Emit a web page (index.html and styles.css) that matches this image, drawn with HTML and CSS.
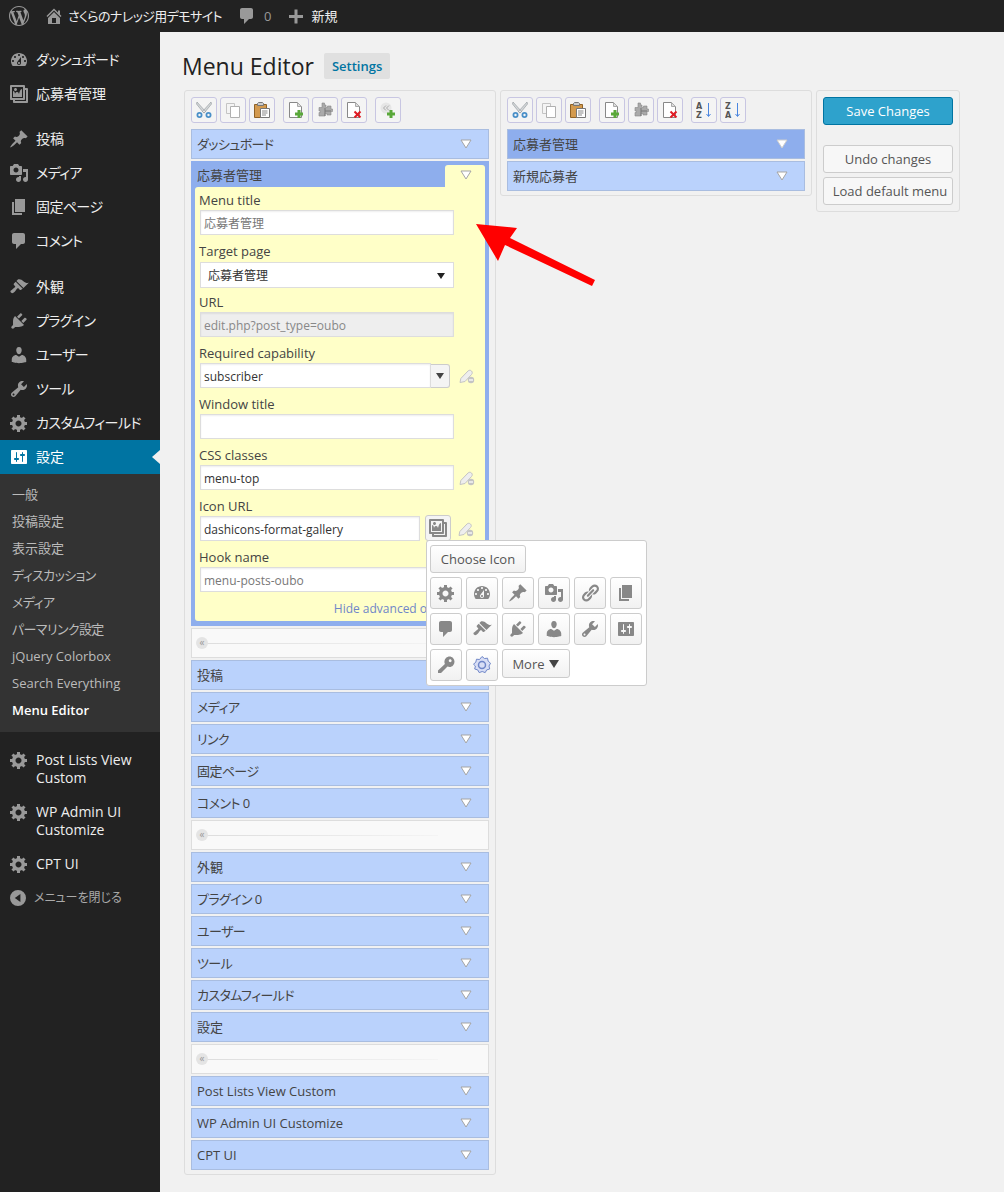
FILE: index.html

```html
<!DOCTYPE html>
<html>
<head>
<title>Menu Editor</title>
<meta name="viewport" content="width=device-width, initial-scale=1">
<link rel="stylesheet" href="styles.css">
</head>
<body>
<svg class="defs" aria-hidden="true">
  <!-- admin icons, 20 unit grid -->
  <symbol id="i-wp" viewBox="0 0 20 20"><path d="M20 10c0-5.51-4.49-10-10-10C4.48 0 0 4.49 0 10c0 5.52 4.48 10 10 10 5.51 0 10-4.48 10-10zM7.78 15.37L4.37 6.22c.55-.02 1.17-.08 1.17-.08.5-.06.44-1.13-.06-1.11 0 0-1.45.11-2.37.11-.18 0-.37 0-.58-.01C4.12 2.69 6.87 1.11 10 1.11c2.33 0 4.45.87 6.05 2.34-.68-.11-1.65.39-1.65 1.58 0 .74.45 1.36.9 2.1.35.61.55 1.36.55 2.46 0 1.49-1.4 5-1.4 5l-3.03-8.37c.54-.02.82-.17.82-.17.5-.05.44-1.25-.06-1.22 0 0-1.44.12-2.38.12-.87 0-2.33-.12-2.33-.12-.5-.03-.56 1.2-.06 1.22l.92.08 1.26 3.41zM17.41 10c.24-.64.74-1.87.43-4.25.7 1.29 1.05 2.71 1.05 4.25 0 3.29-1.73 6.24-4.4 7.78.97-2.59 1.94-5.2 2.92-7.78zM6.1 18.09C3.12 16.65 1.11 13.53 1.11 10c0-1.3.23-2.48.72-3.59C3.25 10.3 4.67 14.2 6.1 18.09zm4.03-6.63l2.58 6.98c-.86.29-1.76.45-2.71.45-.79 0-1.57-.11-2.29-.33.81-2.38 1.62-4.74 2.42-7.1z"/></symbol>
  <symbol id="i-home" viewBox="0 0 20 20"><path d="M16 8.5l1.53 1.53-1.06 1.06L10 4.62l-6.47 6.47-1.06-1.06L10 2.5l4 4v-2h2v4zm-6-2.46l6 5.99V18H4v-5.97zM12 17v-5H8v5h4z"/></symbol>
  <symbol id="i-plus" viewBox="0 0 20 20"><path d="M17 9v3h-5.5v5.5h-3V12H3V9h5.5V3.5h3V9z"/></symbol>
  <symbol id="i-dash" viewBox="0 0 20 20"><path d="M3.76 16h12.48c1.1-1.37 1.76-3.11 1.76-5 0-4.42-3.58-8-8-8s-8 3.58-8 8c0 1.89.66 3.63 1.76 5zM10 4c.55 0 1 .45 1 1s-.45 1-1 1-1-.45-1-1 .45-1 1-1zM6 6c.55 0 1 .45 1 1s-.45 1-1 1-1-.45-1-1 .45-1 1-1zm8 0c.55 0 1 .45 1 1s-.45 1-1 1-1-.45-1-1 .45-1 1-1zm-5.37 5.55L12 7v6c0 1.1-.9 2-2 2s-2-.9-2-2c0-.57.24-1.08.63-1.45zM4 10c.55 0 1 .45 1 1s-.45 1-1 1-1-.45-1-1 .45-1 1-1zm12 0c.55 0 1 .45 1 1s-.45 1-1 1-1-.45-1-1 .45-1 1-1zm-5 3c0-.55-.45-1-1-1s-1 .45-1 1 .45 1 1 1 1-.45 1-1z"/></symbol>
  <symbol id="i-gallery" viewBox="0 0 20 20"><path d="M16 4h1.96c.57 0 1.04.47 1.04 1.04v12.92c0 .57-.47 1.04-1.04 1.04H5.04C4.47 19 4 18.53 4 17.96V16H2.04C1.47 16 1 15.53 1 14.96V2.04C1 1.47 1.47 1 2.04 1h12.92c.57 0 1.04.47 1.04 1.04V4zM3 14h11V3H3v11zm5-8.5C8 4.67 7.33 4 6.5 4S5 4.67 5 5.5 5.67 7 6.5 7 8 6.33 8 5.5zm2 4.5s1-5 3-5v8H4V7c2 0 2 3 2 3s.33-2 2-2 2 2 2 2zm7 7V6h-1v8.96c0 .57-.47 1.04-1.04 1.04H6v1h11z"/></symbol>
  <symbol id="i-pin" viewBox="0 0 20 20"><path d="M10.44 3.02l1.82-1.82 6.36 6.35-1.83 1.82c-1.05-.68-2.48-.57-3.41.36l-.75.75c-.92.93-1.04 2.35-.35 3.41l-1.83 1.82-2.41-2.41-2.8 2.79c-.42.42-3.38 2.71-3.8 2.29s1.86-3.39 2.28-3.81l2.79-2.79L4.1 9.36l1.83-1.82c1.05.69 2.48.57 3.4-.36l.75-.75c.93-.92 1.05-2.35.36-3.41z"/></symbol>
  <symbol id="i-media" viewBox="0 0 20 20"><path d="M13 11V4c0-.55-.45-1-1-1h-1.67L9 1H5L3.67 3H2c-.55 0-1 .45-1 1v7c0 .55.45 1 1 1h10c.55 0 1-.45 1-1zM7 4.5c1.38 0 2.5 1.12 2.5 2.5S8.38 9.5 7 9.5 4.5 8.38 4.5 7 5.62 4.5 7 4.5zM14 6h5v10.5c0 1.38-1.12 2.5-2.5 2.5S14 17.88 14 16.5s1.12-2.5 2.5-2.5c.17 0 .34.02.5.05V9h-3V6zm-4 8.05V13h2v3.5c0 1.38-1.12 2.5-2.5 2.5S7 17.88 7 16.5 8.12 14 9.5 14c.17 0 .34.02.5.05z"/></symbol>
  <symbol id="i-page" viewBox="0 0 20 20"><path d="M6 15V2h10v13H6zm-1 1h8v2H3V5h2v11z"/></symbol>
  <symbol id="i-comment" viewBox="0 0 20 20"><path d="M5 2h9c1.1 0 2 .9 2 2v7c0 1.1-.9 2-2 2h-2l-5 5v-5H5c-1.1 0-2-.9-2-2V4c0-1.1.9-2 2-2z"/></symbol>
  <symbol id="i-brush" viewBox="0 0 20 20"><path d="M14.48 11.06L7.41 3.99l1.5-1.5c.5-.56 2.3-.47 3.51.32 1.21.8 1.43 1.28 2.91 2.1 1.18.64 2.45 1.26 4.45.85zm-.71.71L6.7 4.7 4.93 6.47c-.39.39-.39 1.02 0 1.41l1.06 1.06c.39.39.39 1.03 0 1.42-.6.6-1.43 1.11-2.21 1.69-.35.26-.7.53-1.01.84C1.43 13.23.95 14.54 2 15.59c1.05 1.04 2.36.57 3.7-.76.31-.31.58-.66.84-1.01.58-.78 1.09-1.61 1.69-2.21.39-.39 1.02-.39 1.41 0l1.06 1.06c.39.39 1.02.39 1.41 0z"/></symbol>
  <symbol id="i-plug" viewBox="0 0 20 20"><path d="M13.11 4.36L9.87 7.6 8 5.73l3.24-3.24c.35-.34 1.05-.2 1.56.32.52.51.66 1.21.31 1.55zm-8 1.77l.91-1.12 9.01 9.01-1.19.84c-.71.71-2.63 1.16-3.82 1.16H6.14L4.9 17.26c-.59.59-1.54.59-2.12 0-.59-.58-.59-1.53 0-2.12l1.24-1.24v-3.88c0-1.13.4-3.19 1.09-3.89zm7.26 3.97l3.24-3.24c.34-.35 1.04-.21 1.55.31.52.51.66 1.21.31 1.55l-3.24 3.25z"/></symbol>
  <symbol id="i-user" viewBox="0 0 20 20"><path d="M10 9.25c-2.27 0-2.73-3.44-2.73-3.44C7 4.02 7.82 2 9.97 2c2.16 0 2.98 2.02 2.71 3.81 0 0-.41 3.44-2.68 3.44zm0 2.57L12.72 10c2.39 0 4.52 2.33 4.52 4.53v2.49s-3.65 1.13-7.24 1.13c-3.65 0-7.24-1.13-7.24-1.13v-2.49c0-2.25 1.94-4.48 4.47-4.48z"/></symbol>
  <symbol id="i-tool" viewBox="0 0 20 20"><path d="M16.68 9.77c-1.34 1.34-3.3 1.67-4.95.99l-5.41 6.52c-.99.99-2.59.99-3.58 0s-.99-2.59 0-3.57l6.52-5.42c-.68-1.65-.35-3.61.99-4.95 1.28-1.28 3.12-1.62 4.72-1.06l-2.89 2.89 2.82 2.82 2.86-2.87c.53 1.58.18 3.39-1.08 4.65zM3.81 16.21c.4.39 1.04.39 1.43 0 .4-.4.4-1.04 0-1.43-.39-.4-1.03-.4-1.43 0-.39.39-.39 1.03 0 1.43z"/></symbol>
  <symbol id="i-gear" viewBox="0 0 20 20"><path d="M18 12h-2.18c-.17.7-.44 1.35-.81 1.93l1.54 1.54-2.1 2.1-1.54-1.54c-.58.36-1.23.63-1.91.79V19H8v-2.18c-.68-.16-1.33-.43-1.91-.79l-1.54 1.54-2.12-2.12 1.54-1.54c-.36-.58-.63-1.23-.79-1.91H1V9.03h2.17c.16-.7.44-1.35.8-1.94L2.43 5.55l2.1-2.1 1.54 1.54c.58-.37 1.24-.64 1.93-.81V2h3v2.18c.68.16 1.33.43 1.91.79l1.54-1.54 2.12 2.12-1.54 1.54c.36.59.64 1.24.8 1.94H18V12zm-8.5 1.5c1.66 0 3-1.34 3-3s-1.34-3-3-3-3 1.34-3 3 1.34 3 3 3z"/></symbol>
  <symbol id="i-sliders" viewBox="0 0 20 20"><path d="M18 16V4c0-.55-.45-1-1-1H3c-.55 0-1 .45-1 1v12c0 .55.45 1 1 1h14c.55 0 1-.45 1-1zM8 11h1c.55 0 1 .45 1 1s-.45 1-1 1H8v1.5c0 .28-.22.5-.5.5s-.5-.22-.5-.5V13H6c-.55 0-1-.45-1-1s.45-1 1-1h1V5.5c0-.28.22-.5.5-.5s.5.22.5.5V11zm5-2h-1c-.55 0-1-.45-1-1s.45-1 1-1h1V5.5c0-.28.22-.5.5-.5s.5.22.5.5V7h1c.55 0 1 .45 1 1s-.45 1-1 1h-1v5.5c0 .28-.22.5-.5.5s-.5-.22-.5-.5V9z"/></symbol>
  <symbol id="i-links" viewBox="0 0 20 20"><path d="M17.74 2.76c1.68 1.69 1.68 4.41 0 6.1l-1.53 1.52c-1.12 1.12-2.7 1.47-4.14 1.09l2.62-2.61.76-.77.76-.76c.84-.84.84-2.2 0-3.04-.84-.85-2.2-.85-3.04 0l-.77.76-3.38 3.38c-.37-1.44-.02-3.02 1.1-4.14l1.52-1.53c1.69-1.68 4.42-1.68 6.1 0zM8.59 13.43l5.34-5.34c.42-.42.42-1.1 0-1.52-.44-.43-1.13-.39-1.53 0l-5.33 5.34c-.42.42-.42 1.1 0 1.52.44.43 1.13.39 1.52 0zm-.76 2.29l4.14-4.15c.38 1.44.03 3.02-1.09 4.14l-1.52 1.53c-1.69 1.68-4.41 1.68-6.1 0-1.68-1.68-1.68-4.42 0-6.1l1.53-1.52c1.12-1.12 2.7-1.47 4.14-1.1l-4.14 4.15c-.85.84-.85 2.2 0 3.05.84.84 2.2.84 3.04 0z"/></symbol>
  <symbol id="i-key" viewBox="0 0 20 20"><path fill-rule="evenodd" d="M17 3c-2-2-5-2-7 0-1.700 1.700-2 4-1.100 6L2 15.500V18h3l6.500-6.500c2 .9 4 .5 5.500-1 2-2 2-5.500 0-7.500zm-1.800 3.700c-.6.6-1.400.6-2 0s-.6-1.400 0-2 1.400-.6 2 0 .6 1.400 0 2z"/></symbol>
  <symbol id="i-collapse" viewBox="0 0 20 20"><path fill-rule="evenodd" d="M10 20a10 10 0 1 1 0-20 10 10 0 0 1 0 20zm3-15l-7 5 7 5z"/></symbol>
  <symbol id="i-cog" viewBox="0 0 20 20"><path fill="#d8def5" stroke="#6f86c8" d="M10 1.5l2.5 2 3-.3.7 3 2.300 2-1.500 2.800.7 3-3 .9-1.500 2.700-3-1.100-3 1.100-1.500-2.700-3-.9.7-3L1.500 9.200l2.300-2 .7-3 3 .3z"/><circle cx="10" cy="10" r="3.5" fill="none" stroke="#6f86c8" stroke-width="1.5"/></symbol>
  <symbol id="i-pencil" viewBox="0 0 16 16"><path fill="#eee" stroke="#c4c4c4" d="M1 14.500l.8-4L9 3c1-1 2.500-1 3.500 0s1 2.500 0 3.500L6 13.500z"/><circle cx="12" cy="12" r="3.200" fill="#c4c4c4"/><rect x="10" y="11.400" width="4" height="1.200" fill="#fff"/></symbol>

  <!-- toolbar icons, 16 unit grid -->
  <symbol id="t-cut" viewBox="0 0 16 16"><path fill="#d4d8da" stroke="#8e9498" stroke-width=".6" d="M1 0l8.500 9.500-1.700 1.500L.5 2zM15 0L6.500 9.500l1.700 1.500L15.500 2z"/><g fill="none" stroke="#4a90c8" stroke-width="1.800"><circle cx="3.500" cy="13" r="2.100"/><circle cx="12.500" cy="13" r="2.100"/></g></symbol>
  <symbol id="t-copy" viewBox="0 0 16 16"><path fill="#f4f4f4" stroke="#c4c4c4" d="M1.500 1.500h8v10h-8z"/><path fill="#fff" stroke="#b0b0b0" d="M5.500 4.500h9v11h-9z"/></symbol>
  <symbol id="t-paste" viewBox="0 0 16 16"><path fill="#d39a4e" stroke="#8f6226" d="M.5 2.500h12v13H.5z"/><path fill="#ccc" stroke="#777" d="M3.500 1.500l1-1h4l1 1v2h-6z"/><path fill="#fff" stroke="#777" d="M6.500 6.500h9v9h-9z"/><path stroke="#888" d="M8 9h5.500M8 11h5.500M8 13h4"/></symbol>
  <symbol id="t-new" viewBox="0 0 16 16"><path fill="#fff" stroke="#888" d="M1.500.5h8l4 4v11h-12z"/><path fill="#ddd" stroke="#aaa" d="M9.500.5v4h4z"/><path fill="#5aa83a" d="M9.500 8h3v2.500H15v3h-2.500V16h-3v-2.500H7v-3h2.500z"/></symbol>
  <symbol id="t-puzzle" viewBox="0 0 16 16"><path fill="#aaa" stroke="#888" stroke-width=".6" d="M5 1h2.500v2H9v2.500h1.500V4H14v3h1.500v2.500H14V13h-4v-1.500H8V14H2v-3.500h1.500V9H2V5.500h3z"/><path stroke="#777" fill="none" d="M8 6v8M8 9h6"/></symbol>
  <symbol id="t-del" viewBox="0 0 16 16"><path fill="#fff" stroke="#888" d="M1.500.5h8l4 4v11h-12z"/><path fill="#ddd" stroke="#aaa" d="M9.500.5v4h4z"/><path stroke="#e01c24" stroke-width="2" d="M8.500 9.500l6 6M14.500 9.500l-6 6"/></symbol>
  <symbol id="t-sep" viewBox="0 0 16 16"><circle cx="6" cy="6" r="5.500" fill="#e6e6e6"/><path fill="none" stroke="#aaa" d="M6 3.500L3.500 6 6 8.500M9 3.500L6.500 6 9 8.500"/><path fill="#5aa83a" d="M9.500 8h3v2.500H15v3h-2.500V16h-3v-2.500H7v-3h2.500z"/></symbol>
  <symbol id="t-az" viewBox="0 0 16 16"><text x="0" y="7" class="sort-letter">A</text><text x="0" y="15.500" class="sort-letter">Z</text><path stroke="#4a86e0" fill="none" d="M12.500 1v13M10.500 12l2 2.500 2-2.500"/></symbol>
  <symbol id="t-za" viewBox="0 0 16 16"><text x="0" y="7" class="sort-letter">Z</text><text x="0" y="15.500" class="sort-letter">A</text><path stroke="#4a86e0" fill="none" d="M12.500 1v13M10.500 12l2 2.500 2-2.500"/></symbol>

  <symbol id="tri" viewBox="0 0 12 10"><path d="M1 1h10L6 9z"/></symbol>
</svg>

<header class="adminbar">
  <svg class="bar-logo"><use href="#i-wp"/></svg>
  <svg class="bar-icon home"><use href="#i-home"/></svg>
  <span class="bar-site">さくらのナレッジ用デモサイト</span>
  <svg class="bar-icon comment"><use href="#i-comment"/></svg>
  <span class="bar-count">0</span>
  <svg class="bar-icon plus"><use href="#i-plus"/></svg>
  <span class="bar-new">新規</span>
</header>

<div class="layout">
  <nav class="sidebar">
    <a class="nav kana"><svg><use href="#i-dash"/></svg>ダッシュボード</a>
    <a class="nav"><svg><use href="#i-gallery"/></svg>応募者管理</a>
    <div class="nav-sep"></div>
    <a class="nav"><svg><use href="#i-pin"/></svg>投稿</a>
    <a class="nav kana"><svg><use href="#i-media"/></svg>メディア</a>
    <a class="nav kana"><svg><use href="#i-page"/></svg>固定ページ</a>
    <a class="nav kana"><svg><use href="#i-comment"/></svg>コメント</a>
    <div class="nav-sep wide"></div>
    <a class="nav"><svg><use href="#i-brush"/></svg>外観</a>
    <a class="nav kana"><svg><use href="#i-plug"/></svg>プラグイン</a>
    <a class="nav kana"><svg><use href="#i-user"/></svg>ユーザー</a>
    <a class="nav kana"><svg><use href="#i-tool"/></svg>ツール</a>
    <a class="nav kana"><svg><use href="#i-gear"/></svg>カスタムフィールド</a>
    <a class="nav active"><svg><use href="#i-sliders"/></svg>設定</a>
    <div class="submenu">
      <a>一般</a>
      <a>投稿設定</a>
      <a>表示設定</a>
      <a class="kana">ディスカッション</a>
      <a class="kana">メディア</a>
      <a class="kana">パーマリンク設定</a>
      <a>jQuery Colorbox</a>
      <a>Search Everything</a>
      <a class="current">Menu Editor</a>
    </div>
    <div class="nav-sep"></div>
    <a class="nav two"><svg><use href="#i-gear"/></svg><span>Post Lists View Custom</span></a>
    <a class="nav two"><svg><use href="#i-gear"/></svg><span>WP Admin UI Customize</span></a>
    <a class="nav"><svg><use href="#i-gear"/></svg>CPT UI</a>
    <a class="nav collapse"><svg><use href="#i-collapse"/></svg>メニューを閉じる</a>
  </nav>

  <main class="content">
    <div class="title-row">
      <h2>Menu Editor</h2>
      <a class="settings-link">Settings</a>
    </div>

    <div class="columns">
      <section class="panel menus">
        <div class="toolbar">
          <button class="tbtn"><svg><use href="#t-cut"/></svg></button>
          <button class="tbtn"><svg><use href="#t-copy"/></svg></button>
          <button class="tbtn"><svg><use href="#t-paste"/></svg></button>
          <button class="tbtn group"><svg><use href="#t-new"/></svg></button>
          <button class="tbtn"><svg><use href="#t-puzzle"/></svg></button>
          <button class="tbtn"><svg><use href="#t-del"/></svg></button>
          <button class="tbtn group"><svg><use href="#t-sep"/></svg></button>
        </div>
        <div class="items">
          <div class="item kana"><span>ダッシュボード</span><svg class="tri"><use href="#tri"/></svg></div>

          <div class="item-open">
            <div class="item-head">
              <span>応募者管理</span>
              <div class="item-tab"><svg class="tri"><use href="#tri"/></svg></div>
            </div>
            <div class="editor">
              <div class="field">
                <label>Menu title</label>
                <input class="input dim" value="応募者管理">
              </div>
              <div class="field">
                <label>Target page</label>
                <div class="select-box"><span>応募者管理</span><i class="select-arrow"></i></div>
              </div>
              <div class="field">
                <label>URL</label>
                <input class="input locked" value="edit.php?post_type=oubo" readonly>
              </div>
              <div class="field">
                <label>Required capability</label>
                <div class="field-row">
                  <input class="input cap" value="subscriber">
                  <button class="combo-btn"><i class="select-arrow"></i></button>
                  <svg class="reset"><use href="#i-pencil"/></svg>
                </div>
              </div>
              <div class="field">
                <label>Window title</label>
                <input class="input" value="">
              </div>
              <div class="field">
                <label>CSS classes</label>
                <div class="field-row">
                  <input class="input" value="menu-top">
                  <svg class="reset"><use href="#i-pencil"/></svg>
                </div>
              </div>
              <div class="field">
                <label>Icon URL</label>
                <div class="field-row">
                  <input class="input icon-url" value="dashicons-format-gallery">
                  <button class="icon-pick"><svg><use href="#i-gallery"/></svg></button>
                  <svg class="reset"><use href="#i-pencil"/></svg>
                </div>
              </div>
              <div class="field">
                <label>Hook name</label>
                <input class="input dim" value="menu-posts-oubo">
              </div>
              <a class="advanced">Hide advanced options</a>
            </div>
          </div>

          <div class="sep-item"><i class="sep-knob">«</i></div>
          <div class="item"><span>投稿</span><svg class="tri"><use href="#tri"/></svg></div>
          <div class="item kana"><span>メディア</span><svg class="tri"><use href="#tri"/></svg></div>
          <div class="item kana"><span>リンク</span><svg class="tri"><use href="#tri"/></svg></div>
          <div class="item kana"><span>固定ページ</span><svg class="tri"><use href="#tri"/></svg></div>
          <div class="item kana"><span>コメント 0</span><svg class="tri"><use href="#tri"/></svg></div>
          <div class="sep-item"><i class="sep-knob">«</i></div>
          <div class="item"><span>外観</span><svg class="tri"><use href="#tri"/></svg></div>
          <div class="item kana"><span>プラグイン 0</span><svg class="tri"><use href="#tri"/></svg></div>
          <div class="item kana"><span>ユーザー</span><svg class="tri"><use href="#tri"/></svg></div>
          <div class="item kana"><span>ツール</span><svg class="tri"><use href="#tri"/></svg></div>
          <div class="item kana"><span>カスタムフィールド</span><svg class="tri"><use href="#tri"/></svg></div>
          <div class="item"><span>設定</span><svg class="tri"><use href="#tri"/></svg></div>
          <div class="sep-item"><i class="sep-knob">«</i></div>
          <div class="item"><span>Post Lists View Custom</span><svg class="tri"><use href="#tri"/></svg></div>
          <div class="item"><span>WP Admin UI Customize</span><svg class="tri"><use href="#tri"/></svg></div>
          <div class="item"><span>CPT UI</span><svg class="tri"><use href="#tri"/></svg></div>
        </div>

        <div class="icon-popup">
          <button class="pop-btn choose">Choose Icon</button>
          <div class="pop-grid">
            <button class="pop-btn"><svg><use href="#i-gear"/></svg></button>
            <button class="pop-btn"><svg><use href="#i-dash"/></svg></button>
            <button class="pop-btn"><svg><use href="#i-pin"/></svg></button>
            <button class="pop-btn"><svg><use href="#i-media"/></svg></button>
            <button class="pop-btn"><svg><use href="#i-links"/></svg></button>
            <button class="pop-btn"><svg><use href="#i-page"/></svg></button>
            <button class="pop-btn"><svg><use href="#i-comment"/></svg></button>
            <button class="pop-btn"><svg><use href="#i-brush"/></svg></button>
            <button class="pop-btn"><svg><use href="#i-plug"/></svg></button>
            <button class="pop-btn"><svg><use href="#i-user"/></svg></button>
            <button class="pop-btn"><svg><use href="#i-tool"/></svg></button>
            <button class="pop-btn"><svg><use href="#i-sliders"/></svg></button>
            <button class="pop-btn"><svg><use href="#i-key"/></svg></button>
            <button class="pop-btn"><svg><use href="#i-cog"/></svg></button>
            <button class="pop-btn more">More<svg class="more-tri"><use href="#tri"/></svg></button>
          </div>
        </div>
      </section>

      <section class="panel submenus">
        <div class="toolbar">
          <button class="tbtn"><svg><use href="#t-cut"/></svg></button>
          <button class="tbtn"><svg><use href="#t-copy"/></svg></button>
          <button class="tbtn"><svg><use href="#t-paste"/></svg></button>
          <button class="tbtn group"><svg><use href="#t-new"/></svg></button>
          <button class="tbtn"><svg><use href="#t-puzzle"/></svg></button>
          <button class="tbtn"><svg><use href="#t-del"/></svg></button>
          <button class="tbtn group"><svg><use href="#t-az"/></svg></button>
          <button class="tbtn"><svg><use href="#t-za"/></svg></button>
        </div>
        <div class="items">
          <div class="item selected"><span>応募者管理</span><svg class="tri"><use href="#tri"/></svg></div>
          <div class="item"><span>新規応募者</span><svg class="tri"><use href="#tri"/></svg></div>
        </div>
      </section>

      <aside class="panel actions">
        <button class="btn primary">Save Changes</button>
        <button class="btn undo">Undo changes</button>
        <button class="btn load">Load default menu</button>
      </aside>
    </div>
  </main>
</div>

<svg class="red-arrow" viewBox="470 215 130 75"><polygon points="476,224 517,228 510,238 595,280 592,286 505,245 498,261"/></svg>
</body>
</html>
```

FILE: styles.css

```css
* { box-sizing: border-box; }
html, body { margin: 0; padding: 0; }
body { position: relative; height: 1192px; overflow: hidden; background: #f1f1f1; color: #444; font: 13px/18px "Open Sans", "Noto Sans CJK JP", sans-serif; font-feature-settings: "palt"; }
.defs { display: none; }
button { font: inherit; padding: 0; cursor: pointer; }
.kana { letter-spacing: -.6px; }

/* admin bar */
.adminbar { display: flex; align-items: center; height: 32px; background: #222; color: #eee; }
.adminbar svg { fill: #999; flex: none; }
.bar-logo { width: 20px; height: 20px; margin-left: 9px; }
.bar-icon { width: 20px; height: 20px; }
.bar-icon.home { margin-left: 15px; }
.bar-site { margin-left: 4px; width: 169px; white-space: nowrap; letter-spacing: -.6px; }
.bar-count { margin-left: 7px; color: #999; }
.bar-icon.plus { margin-left: 15px; }
.bar-new { margin-left: 5px; }

.layout { display: flex; height: 1160px; }

/* sidebar */
.sidebar { width: 160px; flex: none; background: #222; padding-top: 11px; color: #eee; font-size: 14px; }
.nav { display: flex; align-items: center; height: 34px; padding: 0 8px; line-height: 18px; white-space: nowrap; }
.nav.two { height: 52px; white-space: normal; align-items: center; }
.nav svg { width: 20px; height: 20px; flex: none; margin: 0 7px 0 1px; fill: #999; }
.nav.two svg { align-self: flex-start; margin-top: 7px; }
.nav-sep { height: 11px; }
.nav-sep.wide { height: 12px; }
.nav.active { position: relative; background: #0074a2; color: #fff; }
.nav.active svg { fill: #fff; }
.nav.active::after { content: ""; position: absolute; right: 0; top: 10px; border: 7px solid transparent; border-right: 8px solid #f1f1f1; border-left: 0; }
.nav.collapse { color: #aaa; font-size: 12px; }
.nav.collapse svg { width: 16px; height: 16px; margin: 0 8px 0 2px; }
.submenu { background: #333; padding: 7px 0 8px; color: #bbb; font-size: 13px; }
.submenu a { display: block; height: 27px; line-height: 27px; padding-left: 12px; }
.submenu .current { color: #fff; font-weight: 600; }

/* content */
.content { flex: 1; padding: 20px 0 0 23px; }
.title-row { display: flex; align-items: center; height: 28px; margin-bottom: 10px; }
.title-row h2 { margin: 0 0 0 -1px; font-size: 23px; font-weight: 400; line-height: 28px; color: #222; }
.settings-link { margin-left: 10px; padding: 4px 8px 4px 8px; background: #e0e0e0; color: #0074a2; font-weight: 600; border-radius: 2px; }
.columns { display: flex; align-items: flex-start; gap: 4px; margin-left: 1px; }
.panel { position: relative; background: #f1f1f1; border: 1px solid #ddd; border-radius: 3px; padding: 6px 6px 4px; }
.menus, .submenus { width: 312px; }
.actions { width: 144px; padding-bottom: 6px; }

.toolbar { display: flex; gap: 3px; margin-bottom: 6px; }
.tbtn { display: flex; align-items: center; justify-content: center; width: 26px; height: 26px; background: #f4f4f4; border: 1px solid #c8c6e2; border-radius: 3px; }
.tbtn svg { width: 16px; height: 16px; }
.tbtn.group { margin-left: 5px; }
.sort-letter { font: 700 8px "DejaVu Sans", sans-serif; fill: #555; }

/* menu items */
.items { display: flex; flex-direction: column; gap: 2px; }
.item { display: flex; align-items: center; justify-content: space-between; height: 30px; padding: 0 16px 0 5px; background: #bad2fc; border: 1px solid #a9bde0; color: #444; }
.item.selected { background: #8eaeed; border-color: #a9bde0; }
.tri { width: 12px; height: 10px; fill: #fff; stroke: #a5a5a5; stroke-width: 1; flex: none; }
.item.selected .tri { stroke: #ccc; }
.sep-item { position: relative; height: 30px; background: #f9f9f9; border: 1px solid #ddd; }
.sep-item::before { content: ""; position: absolute; left: 10px; right: 50px; top: 14px; height: 1px; background: linear-gradient(to right, #ddd, #f4f4f4); }
.sep-knob { position: absolute; left: 4px; top: 8px; width: 12px; height: 12px; border-radius: 50%; background: #e4e4e4; color: #999; font: 10px/11px "Open Sans", sans-serif; text-align: center; }

/* opened item */
.item-open { background: #8eaeed; padding: 0 4px 5px; }
.item-head { display: flex; justify-content: space-between; height: 26px; line-height: 28px; padding-left: 2px; }
.item-tab { display: flex; justify-content: center; width: 40px; height: 22px; margin-top: 4px; padding: 5px 0 0 1px; background: #ffffc8; border-radius: 3px 3px 0 0; }
.editor { height: 434px; padding: 5px 4px 0; background: #ffffc8; border-radius: 3px 0 3px 3px; overflow: hidden; }
.field { margin-bottom: 8px; }
.field label { display: block; height: 18px; line-height: 16px; color: #444; }
.field-row { display: flex; align-items: center; height: 25px; }
.input { display: block; width: 254px; height: 25px; margin: 0 0 0 1px; padding: 1px 3px 0; border: 1px solid #ddd; background: #fff; box-shadow: inset 0 1px 2px rgba(0,0,0,.07); font: 12px "Open Sans", "Noto Sans CJK JP", sans-serif; color: #333; outline: 0; }
.input.dim { color: #777; }
.input.locked { background: #eee; color: #888; }
.input.cap { width: 231px; }
.input.icon-url { width: 220px; }
.select-box { display: flex; align-items: center; justify-content: space-between; width: 254px; height: 26px; margin: 1px 0 -2px 1px; padding: 1px 8px 0 7px; background: #fff; border: 1px solid #ddd; font-size: 12px; color: #333; }
.select-arrow { border: 4px solid transparent; border-top: 6px solid #222; border-bottom: 0; }
.combo-btn { display: flex; align-items: center; justify-content: center; width: 19px; height: 24px; background: #f4f4f4; border: 1px solid #ccc; border-radius: 0 3px 3px 0; border-left: 0; }
.combo-btn .select-arrow { border-top-color: #444; }
.reset { width: 16px; height: 16px; margin-left: 5px; flex: none; }
.combo-btn + .reset { margin-left: 9px; }
.icon-pick { display: flex; align-items: center; justify-content: center; width: 26px; height: 26px; margin: -1px 0 0 5px; background: #f4f4f4; border: 1px solid #ccc; border-radius: 3px; flex: none; }
.icon-pick svg { width: 20px; height: 20px; fill: #888; }
.icon-pick + .reset { margin-left: 7px; }
.advanced { display: block; text-align: right; font-size: 12px; color: #6f86c8; margin-top: 1px; padding-right: 19px; white-space: nowrap; }

/* icon chooser */
.icon-popup { position: absolute; left: 241px; top: 449px; width: 221px; height: 146px; padding: 4px 3px; background: #fff; border: 1px solid #ccc; border-radius: 3px; }
.pop-btn { display: flex; align-items: center; justify-content: center; width: 32px; height: 32px; background: linear-gradient(#fff, #f1f1f1); border: 1px solid #ccc; border-radius: 3px; color: #555; }
.pop-btn svg { width: 20px; height: 20px; fill: #888; }
.pop-btn.choose { width: 96px; height: 28px; margin-bottom: 4px; }
.pop-grid { display: flex; flex-wrap: wrap; gap: 4px; }
.pop-btn.more { width: 68px; height: 29px; }
.pop-btn .more-tri { width: 12px; height: 10px; margin-left: 3px; fill: #444; }

/* save box */
.btn { display: block; width: 130px; height: 28px; margin-bottom: 4px; background: #f7f7f7; border: 1px solid #ccc; border-radius: 3px; color: #555; }
.btn:last-child { margin-bottom: 0; }
.btn.primary { background: #2ea2cc; border-color: #0074a2; color: #fff; }
.btn.undo { margin-top: 20px; }
.btn.load { padding-left: 4px; white-space: nowrap; }

.red-arrow { position: absolute; left: 470px; top: 215px; width: 130px; height: 75px; fill: #f00; }
```
